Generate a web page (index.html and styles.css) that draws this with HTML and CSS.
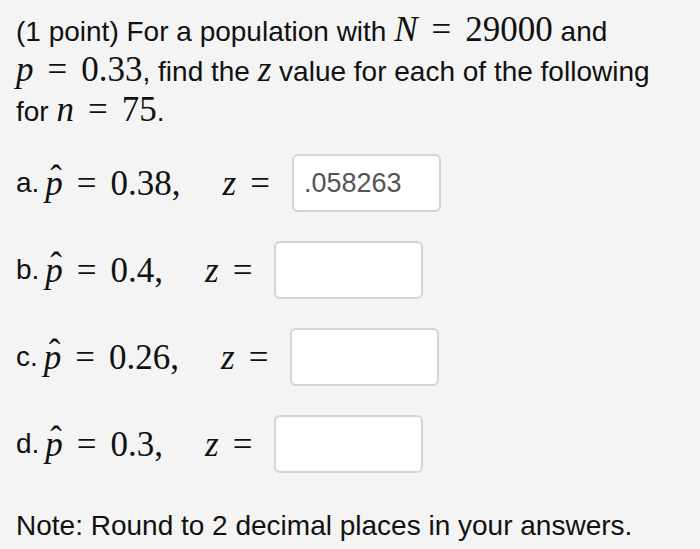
FILE: index.html
```html
<!DOCTYPE html>
<html>
	<head>
		<meta charset="utf-8">
		<title>Sampling proportion z values</title>
		<link rel="stylesheet" href="styles.css">
	</head>
	<body>
		<section class="problem">
			<p class="intro">(1 point) For a population with <span class="m"><i>N</i><span class="eq">=</span>29000</span> and <span class="m"><i>p</i><span class="eq">=</span>0.33</span>, find the <i class="m">z</i> value for each of the following for <span class="m"><i>n</i><span class="eq">=</span>75</span>.</p>

			<div class="parts">
				<div class="part">
					<span class="label">a.</span>
					<span class="m"><i class="hat">p</i><span class="eq">=</span>0.38,</span>
					<span class="m zeq"><i>z</i><span class="eq">=</span></span>
					<input class="answer" type="text" value=".058263">
				</div>
				<div class="part">
					<span class="label">b.</span>
					<span class="m"><i class="hat">p</i><span class="eq">=</span>0.4,</span>
					<span class="m zeq"><i>z</i><span class="eq">=</span></span>
					<input class="answer" type="text" value="">
				</div>
				<div class="part">
					<span class="label">c.</span>
					<span class="m"><i class="hat">p</i><span class="eq">=</span>0.26,</span>
					<span class="m zeq"><i>z</i><span class="eq">=</span></span>
					<input class="answer" type="text" value="">
				</div>
				<div class="part">
					<span class="label">d.</span>
					<span class="m"><i class="hat">p</i><span class="eq">=</span>0.3,</span>
					<span class="m zeq"><i>z</i><span class="eq">=</span></span>
					<input class="answer" type="text" value="">
				</div>
			</div>

			<p class="note">Note: Round to 2 decimal places in your answers.</p>
		</section>
	</body>
</html>
```

FILE: styles.css
```css
body {
	margin: 0;
	background-color: #f4f4f4;
	color: #111;
	font-family: "Liberation Sans", Arial, sans-serif;
	font-size: 28px;
}

.problem {
	padding: 12px 16px 0 16px;
}

.intro {
	margin: 0;
	line-height: 40px;
}

.m {
	font-family: "Liberation Serif", "Times New Roman", serif;
	font-size: 35px;
	line-height: 1;
}

.m i {
	font-style: italic;
}

.eq {
	margin: 0 0.4em;
}

.parts {
	display: flex;
	flex-direction: column;
	gap: 29px;
	margin-top: 22px;
}

.part {
	display: flex;
	align-items: center;
	height: 58px;
}

.label {
	margin-right: 6px;
}

.hat {
	position: relative;
}

.hat::before {
	content: "\02C6";
	position: absolute;
	left: 5px;
	top: -3px;
	font-style: normal;
}

.zeq {
	margin-left: 42px;
}

.zeq .eq {
	margin-right: 22px;
}

.answer {
	box-sizing: border-box;
	width: 149px;
	height: 58px;
	padding: 0 10px;
	border: 2px solid #d4d4d4;
	border-radius: 6px;
	background-color: #fff;
	color: #555;
	font-family: "Liberation Sans", Arial, sans-serif;
	font-size: 27px;
	outline: none;
}

.note {
	margin: 33px 0 0 0;
	line-height: 40px;
}
```
